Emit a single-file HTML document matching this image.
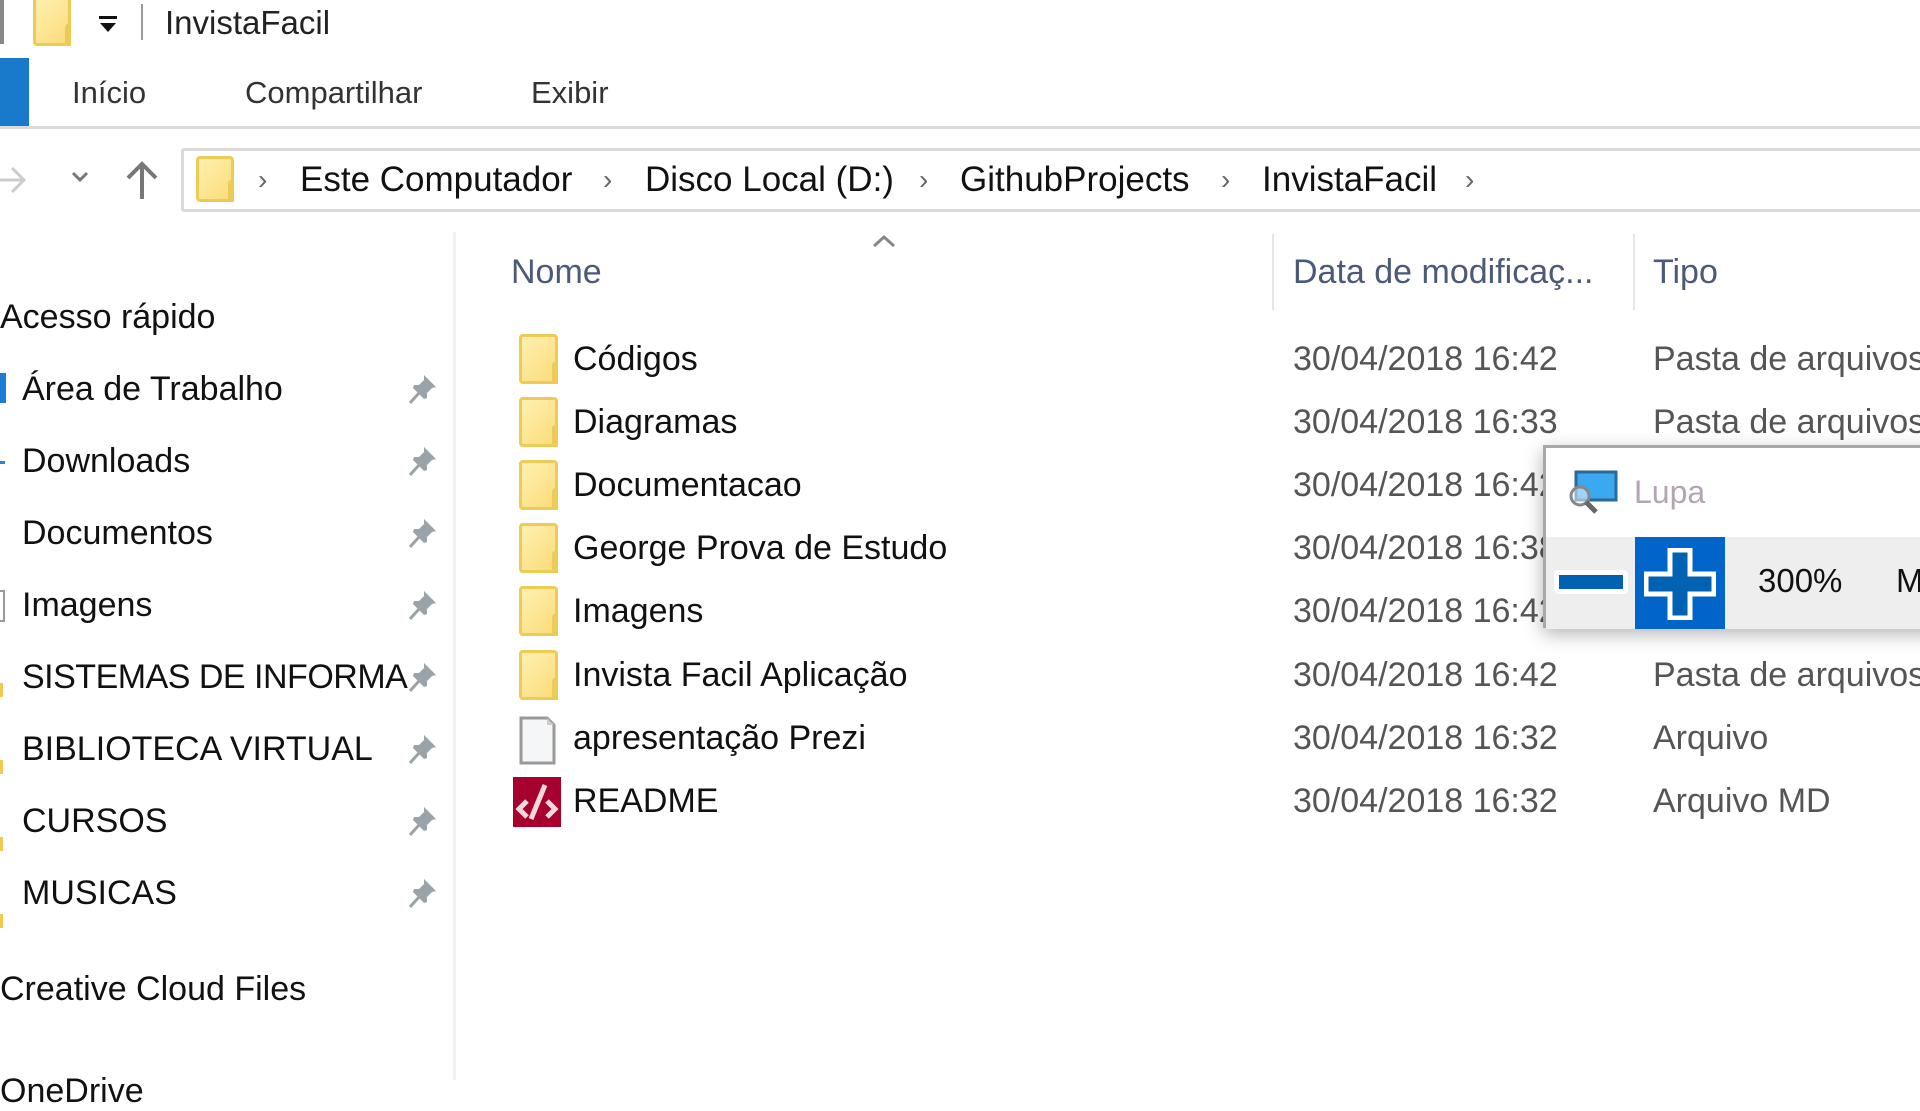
<!DOCTYPE html>
<html><head><meta charset="utf-8"><style>
*{margin:0;padding:0;box-sizing:border-box}
body{width:1920px;height:1080px;overflow:hidden;background:#fff;font-family:"Liberation Sans",sans-serif;position:relative;color:#111}
.t{position:absolute;white-space:nowrap;line-height:40px;height:40px;font-size:34px;letter-spacing:0}
.fold{position:absolute;width:39px;height:50px;background:linear-gradient(135deg,#fff0b0,#fbdc7a);border:3px solid #eecb55;border-radius:4px}
.fold:after{content:"";position:absolute;right:-3px;bottom:-3px;width:6px;height:22px;background:#eecb55;border-radius:3px 0 0 0}
.pin{position:absolute;left:408px;width:30px;height:32px}
.d{color:#555;left:1293px}
.ty{color:#555;left:1653px}
.chev{position:absolute;color:#666;font-size:28px;line-height:40px}
</style></head><body>
<!-- title bar -->
<div style="position:absolute;left:0;top:0;width:4px;height:44px;background:#888"></div>
<div class="fold" style="left:33px;top:-6px;width:38px;height:52px"></div>
<svg style="position:absolute;left:97px;top:14px" width="22" height="20"><rect x="2" y="2" width="18" height="3" fill="#111"/><path d="M3 9 L19 9 L11 18Z" fill="#111"/></svg>
<div style="position:absolute;left:141px;top:4px;width:2px;height:36px;background:#999"></div>
<div class="t" style="left:165px;top:3px;font-size:33px;color:#222">InvistaFacil</div>
<!-- ribbon -->
<div style="position:absolute;left:0;top:58px;width:29px;height:68px;background:#1979ca"></div>
<div class="t" style="left:72px;top:73px;font-size:31px;color:#333">Início</div>
<div class="t" style="left:245px;top:73px;font-size:31px;color:#333">Compartilhar</div>
<div class="t" style="left:531px;top:73px;font-size:31px;color:#333">Exibir</div>
<div style="position:absolute;left:0;top:126px;width:1920px;height:3px;background:#dadada"></div>
<!-- nav buttons -->
<svg style="position:absolute;left:0;top:162px" width="28" height="36"><path d="M0 18 H24 M12 6 L24 18 L12 30" stroke="#ccc" stroke-width="3" fill="none"/></svg>
<svg style="position:absolute;left:70px;top:170px" width="20" height="14"><path d="M3 3 L10 10 L17 3" stroke="#777" stroke-width="3" fill="none"/></svg>
<svg style="position:absolute;left:124px;top:160px" width="36" height="40"><path d="M18 39 V4 M4 18 L18 4 L32 18" stroke="#777" stroke-width="4" fill="none"/></svg>
<!-- address -->
<div style="position:absolute;left:181px;top:148px;width:1760px;height:64px;border:3px solid #d9d9d9;border-radius:3px"></div>
<div class="fold" style="left:196px;top:156px;width:38px;height:46px"></div>
<div class="chev" style="left:258px;top:160px">›</div>
<div class="t" style="left:300px;top:160px;font-size:35px">Este Computador</div>
<div class="chev" style="left:603px;top:160px">›</div>
<div class="t" style="left:645px;top:160px;font-size:35px">Disco Local (D:)</div>
<div class="chev" style="left:919px;top:160px">›</div>
<div class="t" style="left:960px;top:160px;font-size:35px">GithubProjects</div>
<div class="chev" style="left:1221px;top:160px">›</div>
<div class="t" style="left:1262px;top:160px;font-size:35px">InvistaFacil</div>
<div class="chev" style="left:1465px;top:160px">›</div>
<!-- nav pane -->
<div style="position:absolute;left:453px;top:232px;width:3px;height:848px;background:#f2f2f2"></div>
<div class="t" style="left:0;top:297px">Acesso rápido</div>
<div style="position:absolute;left:0;top:373px;width:6px;height:30px;background:#1a7fd4"></div>
<div class="t" style="left:22px;top:369px">Área de Trabalho</div>
<div style="position:absolute;left:0;top:461px;width:5px;height:3px;background:#3a7bd5"></div>
<div class="t" style="left:22px;top:441px">Downloads</div>
<div class="t" style="left:22px;top:513px">Documentos</div>
<div style="position:absolute;left:0;top:590px;width:5px;height:32px;border:2px solid #999;border-left:none"></div>
<div class="t" style="left:22px;top:585px">Imagens</div>
<div style="position:absolute;left:0;top:683px;width:3px;height:14px;background:#eecb55"></div>
<div class="t" style="left:22px;top:657px;letter-spacing:-0.5px">SISTEMAS DE INFORMA</div>
<div style="position:absolute;left:0;top:760px;width:3px;height:14px;background:#eecb55"></div>
<div class="t" style="left:22px;top:729px">BIBLIOTECA VIRTUAL</div>
<div style="position:absolute;left:0;top:837px;width:3px;height:14px;background:#eecb55"></div>
<div class="t" style="left:22px;top:801px">CURSOS</div>
<div style="position:absolute;left:0;top:914px;width:3px;height:14px;background:#eecb55"></div>
<div class="t" style="left:22px;top:873px">MUSICAS</div>
<div class="t" style="left:0;top:969px">Creative Cloud Files</div>
<div class="t" style="left:0;top:1071px">OneDrive</div>
<svg style="display:none"><symbol id="p" viewBox="0 0 30 32"><path d="M16 2 L28 14 L24 15 L19 20 L19 25 L16 26 L5 15 L6 12 L11 12 L16 7Z" fill="#9aa3aa"/><path d="M11 20 L2 30" stroke="#9aa3aa" stroke-width="3"/></symbol></svg>
<svg class="pin" style="top:373px"><use href="#p"/></svg>
<svg class="pin" style="top:445px"><use href="#p"/></svg>
<svg class="pin" style="top:517px"><use href="#p"/></svg>
<svg class="pin" style="top:589px"><use href="#p"/></svg>
<svg class="pin" style="top:661px"><use href="#p"/></svg>
<svg class="pin" style="top:733px"><use href="#p"/></svg>
<svg class="pin" style="top:805px"><use href="#p"/></svg>
<svg class="pin" style="top:877px"><use href="#p"/></svg>
<!-- header -->
<svg style="position:absolute;left:872px;top:234px" width="24" height="14"><path d="M2 12 L12 3 L22 12" stroke="#888" stroke-width="3" fill="none"/></svg>
<div class="t" style="left:511px;top:252px;color:#4a5a78">Nome</div>
<div style="position:absolute;left:1272px;top:234px;width:2px;height:76px;background:#e6e6e6"></div>
<div class="t" style="left:1293px;top:252px;color:#4a5a78">Data de modificaç...</div>
<div style="position:absolute;left:1633px;top:234px;width:2px;height:76px;background:#e6e6e6"></div>
<div class="t" style="left:1653px;top:252px;color:#4a5a78">Tipo</div>
<!-- rows -->
<div class="fold" style="left:519px;top:334px"></div>
<div class="t" style="left:573px;top:339px">Códigos</div>
<div class="t d" style="top:339px">30/04/2018 16:42</div><div class="t ty" style="top:339px">Pasta de arquivos</div>
<div class="fold" style="left:519px;top:397px"></div>
<div class="t" style="left:573px;top:402px">Diagramas</div>
<div class="t d" style="top:402px">30/04/2018 16:33</div><div class="t ty" style="top:402px">Pasta de arquivos</div>
<div class="fold" style="left:519px;top:460px"></div>
<div class="t" style="left:573px;top:465px">Documentacao</div>
<div class="t d" style="top:465px">30/04/2018 16:42</div>
<div class="fold" style="left:519px;top:523px"></div>
<div class="t" style="left:573px;top:528px">George Prova de Estudo</div>
<div class="t d" style="top:528px">30/04/2018 16:38</div>
<div class="fold" style="left:519px;top:586px"></div>
<div class="t" style="left:573px;top:591px">Imagens</div>
<div class="t d" style="top:591px">30/04/2018 16:42</div>
<div class="fold" style="left:519px;top:650px"></div>
<div class="t" style="left:573px;top:655px">Invista Facil Aplicação</div>
<div class="t d" style="top:655px">30/04/2018 16:42</div><div class="t ty" style="top:655px">Pasta de arquivos</div>
<svg style="position:absolute;left:519px;top:716px" width="38" height="50"><path d="M2 2 H28 L35 9 V47 H2Z" fill="#f5f6f8" stroke="#999" stroke-width="3"/><path d="M28 2 V9 H35" fill="#ccc"/></svg>
<div class="t" style="left:573px;top:718px">apresentação Prezi</div>
<div class="t d" style="top:718px">30/04/2018 16:32</div><div class="t ty" style="top:718px">Arquivo</div>
<svg style="position:absolute;left:513px;top:777px" width="48" height="50"><rect width="48" height="50" fill="#a8002e"/><path d="M14 24 L6 32 L14 40 M34 24 L42 32 L34 40 M18 42 L32 8" stroke="#f0d8dc" stroke-width="5" fill="none"/></svg>
<div class="t" style="left:573px;top:781px">README</div>
<div class="t d" style="top:781px">30/04/2018 16:32</div><div class="t ty" style="top:781px">Arquivo MD</div>
<!-- Lupa -->
<div style="position:absolute;left:1543px;top:445px;width:400px;height:183px;background:#fff;border:3px solid #a8a8a8;box-shadow:0 6px 18px rgba(0,0,0,.3)">
 <div style="position:absolute;left:0;top:89px;width:400px;height:92px;background:#eeeeee"></div>
 <svg style="position:absolute;left:22px;top:22px" width="56" height="50"><rect x="8" y="2" width="40" height="28" fill="#3ba8f0" stroke="#2a6a96" stroke-width="3"/><circle cx="12" cy="26" r="9" fill="rgba(255,255,255,.5)" stroke="#888" stroke-width="3"/><path d="M18 32 L28 42" stroke="#666" stroke-width="5"/></svg>
 <div class="t" style="left:88px;top:24px;font-size:32px;color:#b4a4b4">Lupa</div>
 <div style="position:absolute;left:8px;top:122px;width:74px;height:24px;background:#0062b1;border:5px solid #fff;border-radius:4px"></div>
 <div style="position:absolute;left:89px;top:89px;width:90px;height:92px;background:#0064c8"></div>
 <svg style="position:absolute;left:98px;top:100px" width="72" height="72"><path d="M26 2 H46 V26 H70 V46 H46 V70 H26 V46 H2 V26 H26Z" fill="#0062b1" stroke="#fff" stroke-width="5"/></svg>
 <div class="t" style="left:212px;top:113px;font-size:33px;color:#111">300%</div>
 <div class="t" style="left:350px;top:113px;font-size:33px;color:#111">M</div>
</div>
</body></html>
